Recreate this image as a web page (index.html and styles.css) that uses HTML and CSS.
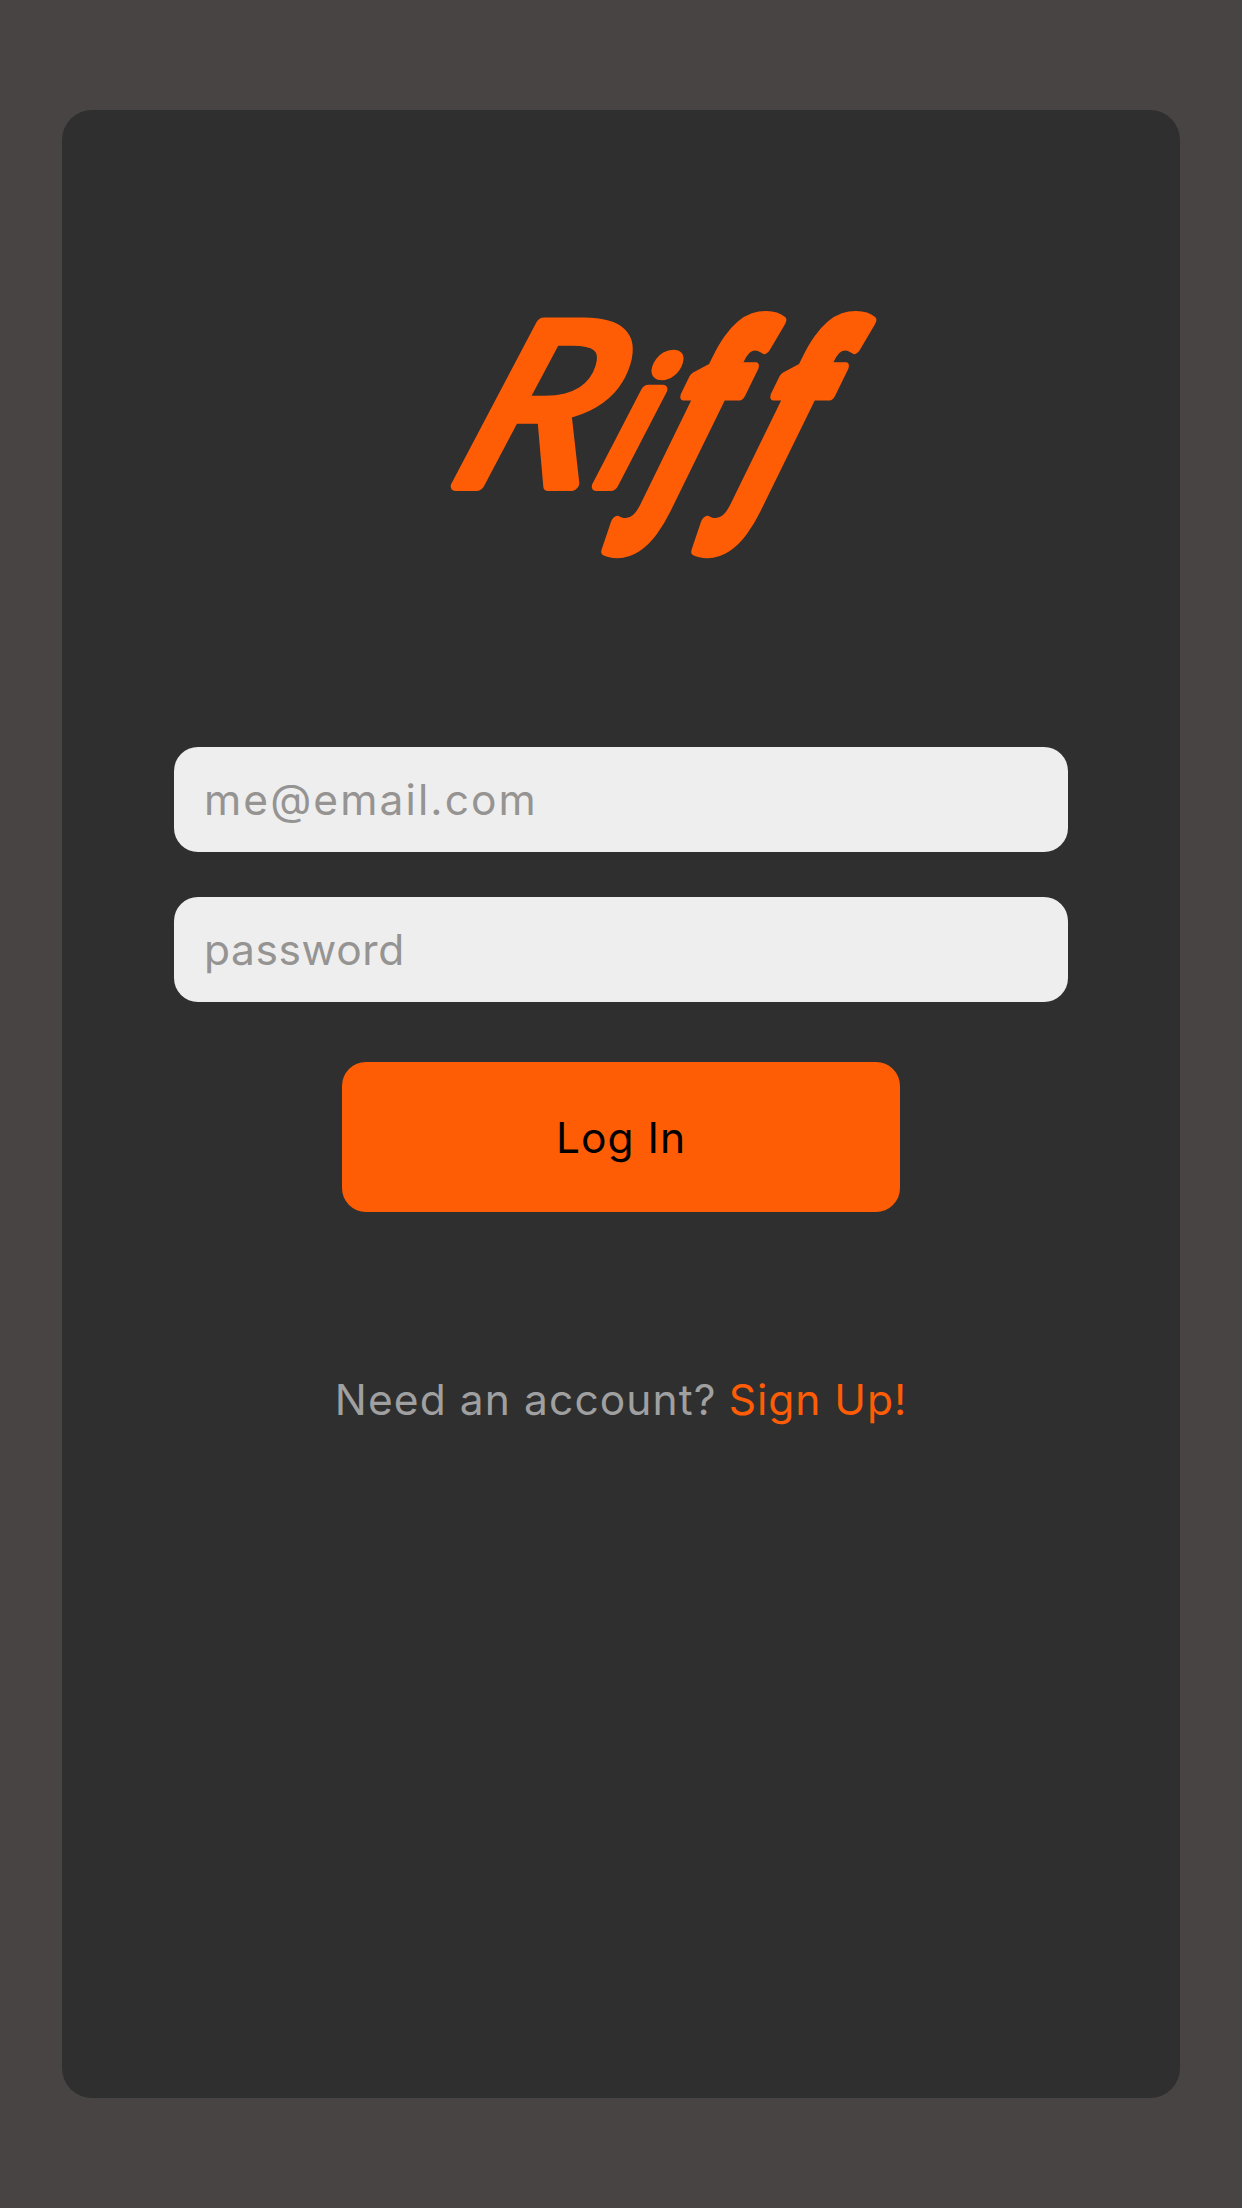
FILE: index.html
```html
<!DOCTYPE html>
<html lang="en">
<head>
<meta charset="utf-8">
<title>Riff</title>
<link rel="stylesheet" href="styles.css">
</head>
<body>
<main class="card">
  <h1 class="brand">
    <svg class="logo" width="450" height="290" viewBox="0 0 450 290" role="img" aria-label="Riff">
      <g class="logo-text">
        <text class="cap" transform="translate(17 195) scale(1.1 1) skewX(-15)">R</text>
        <text class="small" transform="translate(163 195) skewX(-17)">i</text>
        <text class="tall" transform="translate(212 206) scale(.72 1) skewX(-25)">f</text>
        <text class="tall" transform="translate(302 206) scale(.72 1) skewX(-25)">f</text>
      </g>
    </svg>
  </h1>
  <form class="login">
    <input class="field email" type="text" placeholder="me@email.com" aria-label="Email">
    <input class="field password" type="password" placeholder="password" aria-label="Password">
    <button class="submit" type="button">Log In</button>
  </form>
  <p class="signup"><span class="prompt">Need an account?</span><a class="link" href="#">Sign Up!</a></p>
</main>
</body>
</html>
```
FILE: styles.css
```css
* { box-sizing: border-box; }

body {
  margin: 0;
  height: 2208px;
  padding: 110px 62px;
  background: #484443;
  font-family: Inter, "Open Sans", sans-serif;
  font-size: 42.5px;
}

.card {
  display: flex;
  flex-direction: column;
  align-items: center;
  height: 1988px;
  padding-top: 180px;
  border-radius: 30px;
  background: #2f2f2f;
}

.brand {
  width: 450px;
  height: 290px;
  margin: 0 0 0 68px;
}

.logo { display: block; overflow: visible; }

.logo-text {
  font: italic 400 240px "Open Sans", sans-serif;
  fill: #ff5d05;
  stroke: #ff5d05;
  stroke-width: 12px;
  stroke-linejoin: round;
}

.cap { font-size: 226px; font-weight: 400; }
.small { font-size: 176px; font-weight: 500; }
.tall { font-size: 234px; font-weight: 700; }

.login {
  display: flex;
  flex-direction: column;
  align-items: center;
  width: 894px;
  margin-top: 167px;
}

.field {
  width: 100%;
  height: 105px;
  margin-bottom: 45px;
  padding: 0 30px;
  border: 0;
  border-radius: 24px;
  background: #eee;
  font: inherit;
}

.field::placeholder { color: #959492; opacity: 1; }
.email { letter-spacing: 2.1px; }
.password { letter-spacing: 0.6px; margin-bottom: 60px; }

.submit {
  width: 558px;
  height: 150px;
  padding: 0;
  border: 0;
  border-radius: 24px;
  background: #ff5d05;
  color: #000;
  font: inherit;
  letter-spacing: 1px;
}

.signup {
  display: flex;
  gap: 12px;
  margin: 163px 0 0;
  line-height: 50px;
  white-space: nowrap;
}

.prompt { color: #a0a0a0; letter-spacing: 1.1px; }
.link { color: #ff5d05; text-decoration: none; letter-spacing: 1px; }
```
